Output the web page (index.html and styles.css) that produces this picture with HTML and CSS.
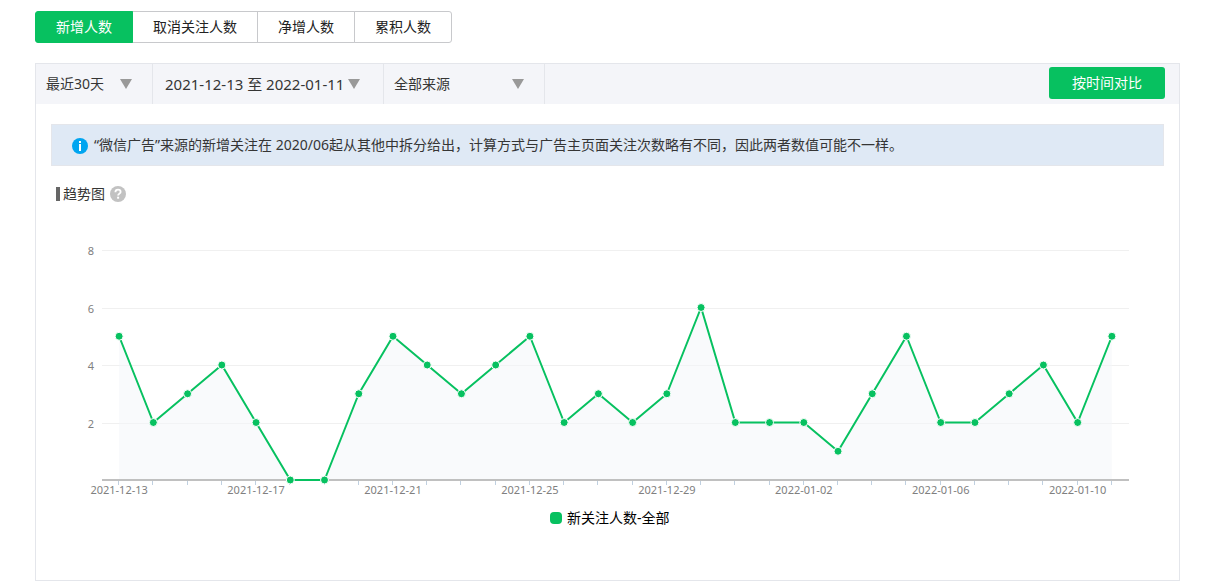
FILE: index.html
```html
<!DOCTYPE html>
<html lang="zh-CN">
<head>
    <meta charset="UTF-8">
    <meta name="viewport" content="width=device-width, initial-scale=1.0">
    <title>用户增长</title>
    <link rel="stylesheet" href="styles.css">
</head>
<body>
    <div class="container">
        <nav class="tabs">
            <button class="tab active" type="button">新增人数</button>
            <button class="tab" type="button">取消关注人数</button>
            <button class="tab" type="button">净增人数</button>
            <button class="tab" type="button">累积人数</button>
        </nav>

        <section class="panel">
            <div class="toolbar">
                <div class="filter filter-period">
                    <select aria-label="时间范围">
                        <option>最近30天</option>
                    </select>
                </div>
                <div class="filter filter-dates">
                    <button type="button">2021-12-13 至 2022-01-11</button>
                </div>
                <div class="filter filter-source">
                    <select aria-label="来源">
                        <option>全部来源</option>
                    </select>
                </div>
                <div class="actions">
                    <button class="btn" type="button">按时间对比</button>
                </div>
            </div>

            <div class="notice">
                <svg class="icon" viewBox="0 0 16 16" aria-hidden="true">
                    <circle cx="8" cy="8" r="8" fill="#00a5f0"/>
                    <rect x="7" y="3" width="2" height="2" fill="#fff"/>
                    <rect x="7" y="6" width="2" height="7" fill="#fff"/>
                </svg>
                <p>“微信广告”来源的新增关注在 2020/06起从其他中拆分给出，计算方式与广告主页面关注次数略有不同，因此两者数值可能不一样。</p>
            </div>

            <div class="chart-title">
                <h2>趋势图</h2>
                <svg class="icon" viewBox="0 0 16 16" aria-hidden="true">
                    <circle cx="8" cy="8" r="8" fill="#c2c2c2"/>
                    <path d="M5.4 6.2C5.4 4.6 6.5 3.7 8 3.7s2.6.9 2.6 2.2c0 1.7-2.5 1.8-2.5 3.7" fill="none" stroke="#fff" stroke-width="1.8"/>
                    <rect x="7.1" y="10.7" width="2" height="2" fill="#fff"/>
                </svg>
            </div>

            <svg class="chart" id="chart" viewBox="0 0 1143 376" role="img" aria-label="新关注人数趋势">
                <g id="grid"></g>
                <path class="area" id="area"/>
                <g id="ticks"></g>
                <line class="axis" x1="66" y1="276" x2="1093" y2="276"/>
                <polyline class="line" id="line"/>
                <g id="dots"></g>
                <rect class="legend-mark" x="514" y="308" width="12" height="12" rx="4"/>
                <text class="legend" x="531" y="319">新关注人数-全部</text>
            </svg>
        </section>
    </div>

    <script>
        const values = [5, 2, 3, 4, 2, 0, 0, 3, 5, 4, 3, 4, 5, 2, 3, 2, 3, 6, 2, 2, 2, 1, 3, 5, 2, 2, 3, 4, 2, 5];
        const left = 66, right = 1093, bottom = 276, unit = 28.75;
        const step = (right - left) / values.length;

        function add(parent, tag, attrs, text) {
            const el = document.createElementNS('http://www.w3.org/2000/svg', tag);
            for (const key in attrs) el.setAttribute(key, attrs[key]);
            if (text !== undefined) el.textContent = text;
            document.getElementById(parent).appendChild(el);
        }

        // 网格线和纵轴刻度
        [2, 4, 6, 8].forEach(v => {
            const y = Math.floor(bottom - v * unit + 0.5) + 0.5;
            add('grid', 'line', { class: 'grid-line', x1: left, x2: right, y1: y, y2: y });
            add('grid', 'text', { class: 'label label-y', x: 58, y: y + 4 }, v);
        });

        const points = values.map((v, i) => [left + step * (i + 0.5), bottom - v * unit]);

        // 数据点、横轴刻度和日期
        points.forEach(([x, y], i) => {
            const tx = Math.floor(x - 0.5) + 0.5;
            add('ticks', 'line', { class: 'tick', x1: tx, x2: tx, y1: 277, y2: 281 });
            add('dots', 'circle', { class: 'dot', cx: x, cy: y, r: 4 });
            if (i % 4 === 0) {
                const date = new Date(Date.UTC(2021, 11, 13 + i)).toISOString().slice(0, 10);
                add('ticks', 'text', { class: 'label label-x', x: x, y: 290 }, date);
            }
        });

        const path = points.map(p => p.join(',')).join(' ');
        document.getElementById('line').setAttribute('points', path);
        document.getElementById('area').setAttribute('d',
            `M${points[0][0]},${bottom} L${path} L${points[points.length - 1][0]},${bottom} Z`);
    </script>
</body>
</html>
```
FILE: styles.css
```css
:root {
    --main-color: #07c160;
    --border-color: #e4e6eb;
    --text-color: #353535;
}

* {
    margin: 0;
    padding: 0;
    box-sizing: border-box;
}

body {
    background: #fff;
    color: var(--text-color);
    font: 14px/20px "Noto Sans", "Noto Sans CJK SC", sans-serif;
}

button, select {
    font: inherit;
    color: inherit;
    cursor: pointer;
}

.container {
    padding: 11px 36px 2px 35px;
}

.tabs {
    display: flex;
    margin-bottom: 20px;
}

.tab {
    height: 32px;
    padding: 0 20px;
    border: 1px solid #c8c9cc;
    background: #fff;
    color: #222;
}

.tab + .tab {
    margin-left: -1px;
}

.tab:first-child {
    border-radius: 3px 0 0 3px;
}

.tab:last-child {
    border-radius: 0 3px 3px 0;
}

.tab.active {
    position: relative;
    background: var(--main-color);
    border-color: var(--main-color);
    color: #fff;
}

.panel {
    border: 1px solid var(--border-color);
}

.toolbar {
    display: flex;
    height: 40px;
    background: #f4f5f9;
}

.filter {
    position: relative;
    border-right: 1px solid var(--border-color);
}

.filter select,
.filter button {
    width: 100%;
    height: 100%;
    padding-left: 10px;
    border: 0;
    background: transparent;
    appearance: none;
    text-align: left;
}

.filter::after {
    content: '';
    position: absolute;
    top: 15px;
    right: 20px;
    border: 6px solid transparent;
    border-top: 10px solid #999;
    border-bottom: 0;
    pointer-events: none;
}

.filter-period {
    width: 117px;
}

.filter-dates {
    width: 231px;
}

.filter-dates button {
    padding-left: 12px;
    font-size: 15px;
}

.filter-dates::after {
    right: 23px;
}

.filter-source {
    width: 161px;
}

.actions {
    margin-left: auto;
    padding: 3px 14px 5px;
}

.btn {
    height: 32px;
    padding: 0 23px;
    border: 0;
    border-radius: 3px;
    background: var(--main-color);
    color: #fff;
}

.notice {
    display: flex;
    align-items: center;
    gap: 6px;
    margin: 20px 15px 18px;
    padding: 10px 20px;
    border: 1px solid #e4e6eb;
    background: #dfe9f5;
}

.icon {
    flex: none;
    width: 16px;
    height: 16px;
}

.notice .icon {
    margin-top: 2px;
}

.chart-title {
    display: flex;
    align-items: center;
    gap: 5px;
    margin-left: 20px;
}

.chart-title h2 {
    display: flex;
    align-items: center;
    gap: 3px;
    font-size: 14px;
    font-weight: normal;
}

.chart-title h2::before {
    content: '';
    width: 4px;
    height: 14px;
    background: #666;
}

.chart {
    display: block;
    width: 100%;
    height: auto;
}

.grid-line {
    stroke: #f0f0f0;
}

.axis {
    stroke: #c0c0c0;
    stroke-width: 2;
}

.tick {
    stroke: #c0d0e0;
}

.area {
    fill: #f4f5f9;
    fill-opacity: 0.5;
}

.line {
    fill: none;
    stroke: var(--main-color);
    stroke-width: 2;
    stroke-linejoin: round;
}

.dot {
    fill: var(--main-color);
    stroke: #fff;
}

.label {
    font-size: 11px;
    fill: #808080;
}

.label-x {
    text-anchor: middle;
}

.label-y {
    text-anchor: end;
}

.legend-mark {
    fill: var(--main-color);
}

.legend {
    font-size: 14px;
    fill: #000;
}
```
